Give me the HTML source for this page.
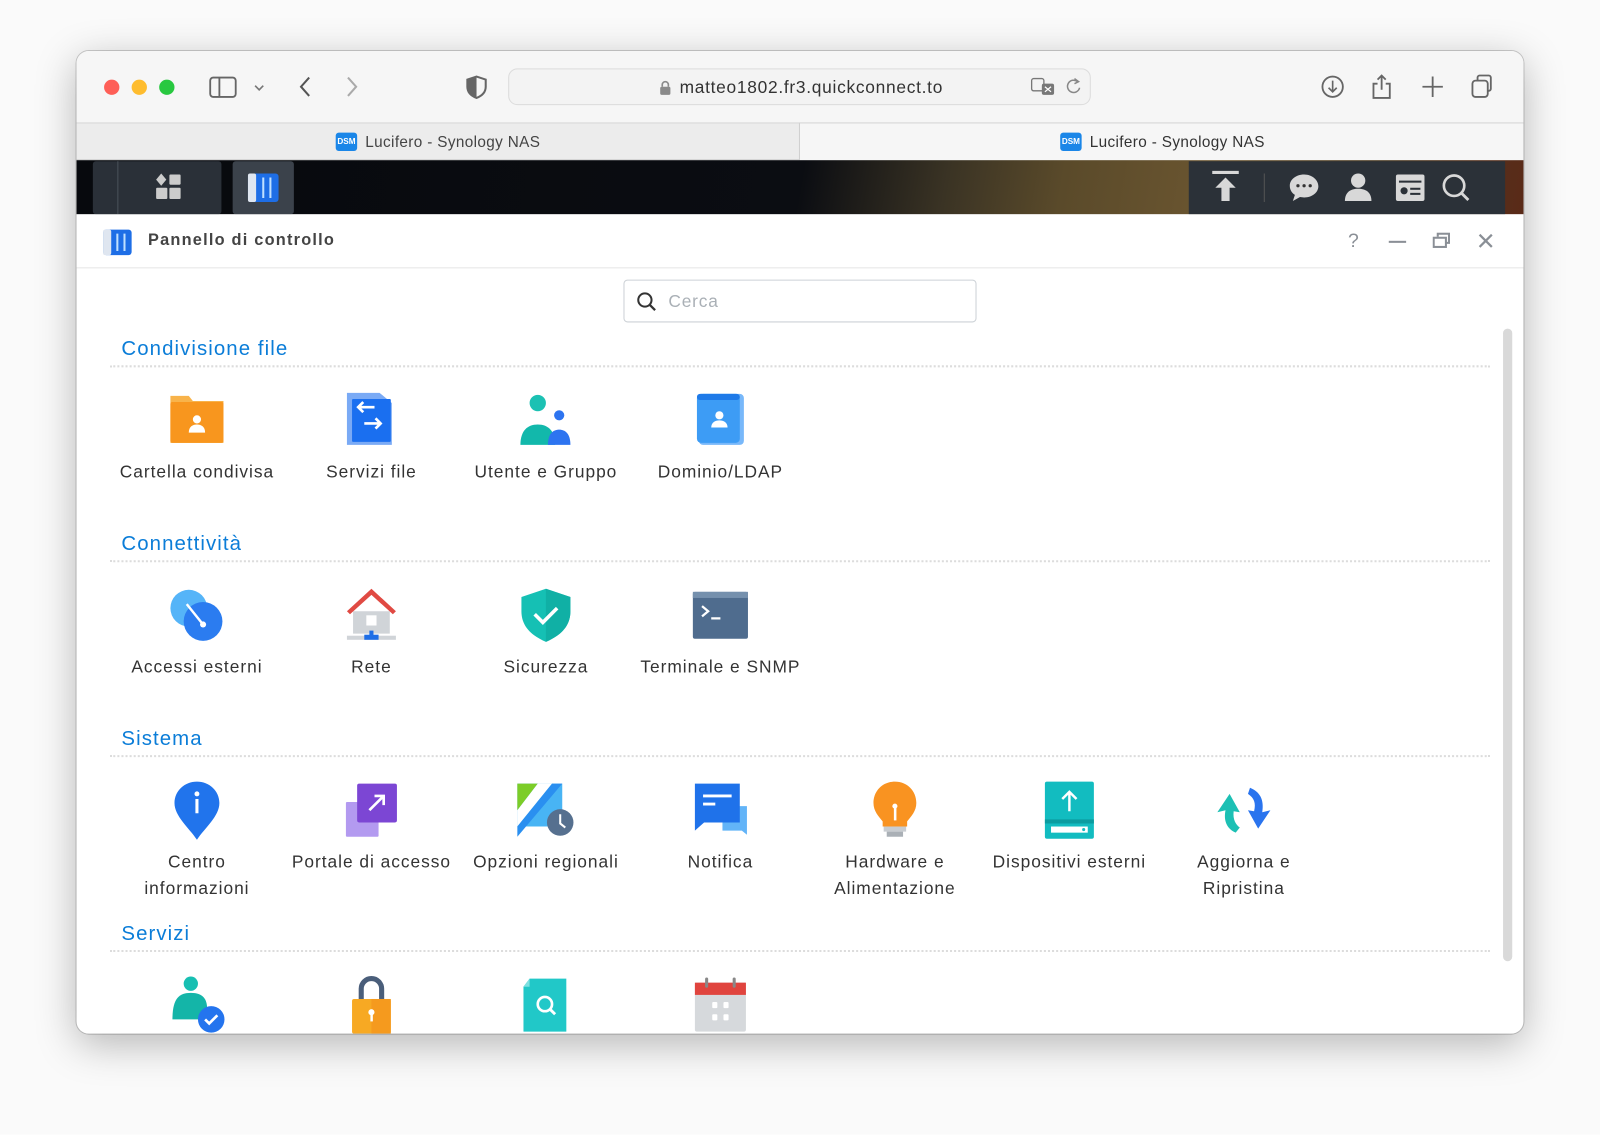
<!DOCTYPE html>
<html><head><meta charset="utf-8"><style>
*{margin:0;padding:0;box-sizing:border-box}
html,body{width:1600px;height:1135px;overflow:hidden;background:#fff;font-family:"Liberation Sans",sans-serif}
#s{position:absolute;left:0;top:0;width:1568px;height:1112px;transform:scale(1.020408);transform-origin:0 0;background:#fafafa}
.a{position:absolute}
#win{left:75px;top:50px;width:1418px;height:963px;border-radius:12px;overflow:hidden;background:#fff;box-shadow:0 10px 40px rgba(0,0,0,.28),0 0 0 1px rgba(0,0,0,.18)}
.dot{width:15px;height:15px;border-radius:50%;top:28px}
.sec{left:44px;font-size:20px;color:#0b7dd8;letter-spacing:1.05px}
.line{left:33px;width:1352px;border-top:2px dotted #dcdcdc;height:0}
.it{width:190px;text-align:center;font-size:17px;color:#333;line-height:26px;letter-spacing:0.95px}
.ic{width:60px;height:60px}
</style></head><body><div id="s">
<div id="win" class="a">
 <div class="a" style="left:0;top:0;width:1418px;height:70px;background:#f6f6f6"></div>
 <div class="a dot" style="left:27px;background:#fe5f57"></div>
 <div class="a dot" style="left:54px;background:#febc2e"></div>
 <div class="a dot" style="left:81px;background:#28c840"></div>
 <svg class="a" style="left:128px;top:24px" width="60" height="24"><rect x="3" y="2" width="25" height="19" rx="3" fill="none" stroke="#666" stroke-width="1.8"/><line x1="12" y1="2" x2="12" y2="21" stroke="#666" stroke-width="1.8"/><path d="M47 10l4 4 4-4" fill="none" stroke="#777" stroke-width="1.6"/></svg>
 <svg class="a" style="left:212px;top:22px" width="80" height="26"><path d="M16 4l-8 9 8 9" fill="none" stroke="#555" stroke-width="2"/><path d="M54 4l8 9-8 9" fill="none" stroke="#aaa" stroke-width="2"/></svg>
 <svg class="a" style="left:381px;top:23px" width="22" height="24"><path d="M11 2l9 3v7c0 6-4 9-9 11-5-2-9-5-9-11V5z" fill="none" stroke="#666" stroke-width="2"/><path d="M11 2v21c-5-2-9-5-9-11V5z" fill="#666"/></svg>
 <div class="a" style="left:423px;top:17px;width:571px;height:36px;border-radius:9px;background:#f3f3f3;border:1px solid #dcdcdc"></div>
 <svg class="a" style="left:571px;top:28px" width="12" height="16"><rect x="1" y="7" width="10" height="8" rx="1.5" fill="#8a8a8a"/><path d="M3 7V5a3 3 0 016 0v2" fill="none" stroke="#8a8a8a" stroke-width="1.6"/></svg>
 <div class="a" style="left:591px;top:26px;font-size:17px;color:#333;letter-spacing:0.7px">matteo1802.fr3.quickconnect.to</div>
 <svg class="a" style="left:935px;top:25px" width="28" height="20"><rect x="1" y="2" width="12" height="12" rx="2" fill="none" stroke="#777" stroke-width="1.3"/><rect x="11" y="7" width="12" height="11" rx="2" fill="#777"/><path d="M14 10l6 5M20 10l-6 5" stroke="#fff" stroke-width="1.2"/></svg>
 <svg class="a" style="left:968px;top:25px" width="18" height="20"><path d="M13 5a6 6 0 10 2 6" fill="none" stroke="#888" stroke-width="1.5"/><path d="M10 2l4 3-4 2" fill="none" stroke="#888" stroke-width="1.5"/></svg>
 <svg class="a" style="left:1218px;top:20px" width="190" height="30"><circle cx="13" cy="15" r="10" fill="none" stroke="#666" stroke-width="1.8"/><path d="M13 9v11M9 16l4 4 4-4" fill="none" stroke="#666" stroke-width="1.6"/><path d="M57 12h-4v14h16V12h-4M61 4v14M57 8l4-4 4 4" fill="none" stroke="#666" stroke-width="1.8"/><path d="M111 5v20M101 15h20" stroke="#666" stroke-width="1.8"/><rect x="150" y="9" width="15" height="16" rx="3" fill="none" stroke="#666" stroke-width="1.8"/><path d="M155 9V6a2 2 0 012-2h9a2 2 0 012 2v11a2 2 0 01-2 2h-1" fill="none" stroke="#666" stroke-width="1.8"/></svg>
 <div class="a" style="left:0;top:70px;width:1418px;height:37px;background:#ececec;border-top:1px solid #d6d6d6;border-bottom:1px solid #d0d0d0"></div>
 <div class="a" style="left:708px;top:70px;width:710px;height:37px;background:#f6f6f6;border-left:1px solid #d0d0d0;border-top:1px solid #d6d6d6"></div>
 <div class="a" style="left:254px;top:80px;width:21px;height:18px;background:#1a86e8;border-radius:3px;color:#fff;font-size:8px;font-weight:bold;line-height:18px;text-align:center">DSM</div>
 <div class="a" style="left:283px;top:81px;font-size:15px;color:#444;letter-spacing:0.35px">Lucifero - Synology NAS</div>
 <div class="a" style="left:964px;top:80px;width:21px;height:18px;background:#1a86e8;border-radius:3px;color:#fff;font-size:8px;font-weight:bold;line-height:18px;text-align:center">DSM</div>
 <div class="a" style="left:993px;top:81px;font-size:15px;color:#333;letter-spacing:0.35px">Lucifero - Synology NAS</div>
 <div class="a" style="left:0;top:107px;width:1418px;height:53px;background:linear-gradient(100deg,#07090d 0%,#0b0d12 50%,#3a3324 60%,#5a4a2a 68%,#6a5530 78%,#4a3a22 90%,#5a2a18 100%)"></div>
 <div class="a" style="left:16px;top:108px;width:126px;height:52px;background:#2a3038;border-radius:3px"></div>
 <div class="a" style="left:40px;top:108px;width:1px;height:52px;background:#4a525b"></div>
 <svg class="a" style="left:77px;top:119px" width="28" height="28"><path d="M6 1l5 6-5 6-5-6z" fill="#ccc"/><rect x="14" y="2" width="11" height="10" rx="1" fill="#ccc"/><rect x="1" y="15" width="11" height="11" rx="1" fill="#ccc"/><rect x="14" y="15" width="11" height="11" rx="1" fill="#ccc"/></svg>
 <div class="a" style="left:153px;top:108px;width:60px;height:52px;background:#3b424b;border-radius:3px"></div>
 <svg class="a" style="left:167px;top:119px" width="32" height="30"><rect x="1" y="1" width="30" height="28" rx="3" fill="#1e6ee6"/><rect x="1" y="1" width="8" height="28" rx="2" fill="#dfe6f0"/><path d="M16 5v20M23 5v20" stroke="#bfe0ff" stroke-width="2"/></svg>
 <div class="a" style="left:1090px;top:108px;width:310px;height:52px;background:#2b3138"></div>
 <svg class="a" style="left:1110px;top:116px" width="260" height="36"><path d="M3 3h26" stroke="#d8d8d8" stroke-width="3"/><path d="M16 8l-10 10h6v13h8V18h6z" fill="#d8d8d8"/><line x1="54" y1="4" x2="54" y2="32" stroke="#555" stroke-width="1"/><path d="M93 5c-8 0-14 5-14 11 0 4 2 7 5 9l-2 6 7-4c1 0 3 .5 4 .5 8 0 14-5 14-11S101 5 93 5z" fill="#d8d8d8"/><circle cx="87" cy="16" r="1.6" fill="#333"/><circle cx="93" cy="16" r="1.6" fill="#333"/><circle cx="99" cy="16" r="1.6" fill="#333"/><circle cx="146" cy="11" r="7" fill="#d8d8d8"/><path d="M133 31c0-9 6-12 13-12s13 3 13 12z" fill="#d8d8d8"/><rect x="183" y="5" width="28" height="26" rx="2" fill="#d8d8d8"/><rect x="186" y="11" width="22" height="2" fill="#2b3138"/><circle cx="191" cy="21" r="3.5" fill="#2b3138"/><rect x="197" y="18" width="10" height="2" fill="#2b3138"/><rect x="197" y="23" width="10" height="2" fill="#2b3138"/><circle cx="240" cy="16" r="10" fill="none" stroke="#d8d8d8" stroke-width="2.6"/><path d="M247 23l7 7" stroke="#d8d8d8" stroke-width="2.8"/></svg>
 <div class="a" style="left:0;top:160px;width:1418px;height:53px;background:#fff;border-bottom:1px solid #e6e6e6"></div>
 <svg class="a" style="left:25px;top:174px" width="30" height="27"><rect x="1" y="1" width="28" height="25" rx="3" fill="#1e6ee6"/><rect x="1" y="1" width="8" height="25" rx="2" fill="#dfe6f0"/><path d="M15 5v17M22 5v17" stroke="#bfe0ff" stroke-width="2"/></svg>
 <div class="a" style="left:70px;top:177px;font-size:16px;font-weight:bold;color:#444;letter-spacing:1.2px">Pannello di controllo</div>
 <div class="a" style="left:1246px;top:176px;font-size:19px;color:#8a8f96">?</div>
 <div class="a" style="left:1286px;top:186px;width:17px;height:2px;background:#8a8f96"></div>
 <svg class="a" style="left:1329px;top:178px" width="18" height="16"><rect x="1" y="5" width="12" height="9" fill="none" stroke="#8a8f96" stroke-width="2"/><path d="M5 4V1h11v9h-3" fill="none" stroke="#8a8f96" stroke-width="2"/></svg>
 <svg class="a" style="left:1373px;top:178px" width="16" height="16"><path d="M2 2l12 12M14 2L2 14" stroke="#8a8f96" stroke-width="2.2"/></svg>
 <div class="a" style="left:536px;top:224px;width:346px;height:42px;border:1px solid #ccd1d6;border-radius:4px;background:#fff"></div>
 <svg class="a" style="left:549px;top:236px" width="20" height="20"><circle cx="8" cy="8" r="6.5" fill="none" stroke="#333" stroke-width="2"/><path d="M13 13l5 5" stroke="#333" stroke-width="2.2"/></svg>
 <div class="a" style="left:580px;top:236px;font-size:17px;color:#aab0b6;letter-spacing:0.8px">Cerca</div>
 <div class="a" style="left:1398px;top:272px;width:9px;height:620px;border-radius:5px;background:#d9d9d9"></div>

 <div class="a sec" style="top:281px">Condivisione file</div>
 <div class="a line" style="top:308px"></div>
 <div class="a sec" style="top:472px">Connettività</div>
 <div class="a line" style="top:499px"></div>
 <div class="a sec" style="top:663px">Sistema</div>
 <div class="a line" style="top:690px"></div>
 <div class="a sec" style="top:854px">Servizi</div>
 <div class="a line" style="top:881px"></div>

 <svg class="a ic" style="left:88px;top:332px" viewBox="0 0 60 60"><path d="M4 6h18l4 5h30v41H4z" fill="#f8b34a"/><rect x="4" y="12" width="52" height="40" rx="2" fill="#f8961e"/><circle cx="30" cy="29" r="4" fill="#fff"/><path d="M22 42c0-6 4-8 8-8s8 2 8 8z" fill="#fff"/></svg>
 <div class="a it" style="left:23px;top:400px">Cartella condivisa</div>
 <svg class="a ic" style="left:259px;top:332px" viewBox="0 0 60 60"><path d="M6 3h32l12 10v41H6z" fill="#7aaaf5"/><rect x="11" y="9" width="38" height="42" rx="1" fill="#1a6ff0"/><path d="M33 17H17m5-5l-5 5 5 5M23 33h16m-5-5l5 5-5 5" fill="none" stroke="#fff" stroke-width="2.6"/></svg>
 <div class="a it" style="left:194px;top:400px">Servizi file</div>
 <svg class="a ic" style="left:430px;top:332px" viewBox="0 0 60 60"><circle cx="22" cy="13" r="8" fill="#1cc1b3"/><path d="M5 54c0-14 7-20 17-20s17 6 17 20z" fill="#12b8ab"/><circle cx="43" cy="25" r="5" fill="#2d74f0"/><path d="M32 54c0-11 5-15 11-15s11 4 11 15z" fill="#2d74f0"/></svg>
 <div class="a it" style="left:365px;top:400px">Utente e Gruppo</div>
 <svg class="a ic" style="left:601px;top:332px" viewBox="0 0 60 60"><rect x="9" y="4" width="44" height="50" rx="4" fill="#78b8fa"/><rect x="7" y="4" width="42" height="48" rx="4" fill="#3d9cf5"/><rect x="7" y="4" width="42" height="6" rx="3" fill="#1e7ae8"/><circle cx="29" cy="25" r="4" fill="#fff"/><path d="M21 37c0-5 4-7 8-7s8 2 8 7z" fill="#fff"/></svg>
 <div class="a it" style="left:536px;top:400px">Dominio/LDAP</div>

 <svg class="a ic" style="left:88px;top:523px" viewBox="0 0 60 60"><circle cx="22" cy="23" r="18" fill="#55b4f8"/><circle cx="36" cy="36" r="19" fill="#2b7cf0"/><path d="M20 19l16 20" stroke="#fff" stroke-width="2.4"/><circle cx="36" cy="39" r="3" fill="#fff"/></svg>
 <div class="a it" style="left:23px;top:591px">Accessi esterni</div>
 <svg class="a ic" style="left:259px;top:523px" viewBox="0 0 60 60"><path d="M12 26h36v22H12z" fill="#d0d4d8"/><path d="M30 4L6 26l3 3 21-19 21 19 3-3z" fill="#e04a43"/><rect x="25" y="30" width="10" height="10" fill="#fff"/><rect x="6" y="50" width="48" height="4" fill="#d0d4d8"/><rect x="28" y="45" width="4" height="6" fill="#1e6ee6"/><rect x="23" y="49" width="14" height="5" fill="#1e6ee6"/></svg>
 <div class="a it" style="left:194px;top:591px">Rete</div>
 <svg class="a ic" style="left:430px;top:523px" viewBox="0 0 60 60"><path d="M30 4l24 8v14c0 15-10 24-24 30C16 50 6 41 6 26V12z" fill="#15c0b4"/><path d="M30 4l24 8v14c0 15-10 24-24 30z" fill="#10b0a5"/><path d="M19 29l8 8 14-14" fill="none" stroke="#fff" stroke-width="3.5"/></svg>
 <div class="a it" style="left:365px;top:591px">Sicurezza</div>
 <svg class="a ic" style="left:601px;top:523px" viewBox="0 0 60 60"><rect x="3" y="7" width="54" height="46" rx="2" fill="#4f6c8e"/><rect x="3" y="7" width="54" height="6" fill="#7590ad"/><path d="M12 21l6 5-6 5" fill="none" stroke="#fff" stroke-width="2.2"/><path d="M21 33h9" stroke="#fff" stroke-width="2.2"/></svg>
 <div class="a it" style="left:536px;top:591px">Terminale e SNMP</div>

 <svg class="a ic" style="left:88px;top:714px" viewBox="0 0 60 60"><path d="M30 2c-12 0-22 9-22 21 0 13 14 24 22 36 8-12 22-23 22-36C52 11 42 2 30 2z" fill="#2174ec"/><circle cx="30" cy="14" r="2.4" fill="#fff"/><rect x="28.5" y="19" width="3" height="14" fill="#fff"/></svg>
 <div class="a it" style="left:23px;top:782px">Centro<br>informazioni</div>
 <svg class="a ic" style="left:259px;top:714px" viewBox="0 0 60 60"><rect x="5" y="22" width="32" height="34" rx="1" fill="#b39af0"/><rect x="16" y="4" width="39" height="38" rx="2" fill="#7c46d4"/><path d="M28 30l14-14m-9 0h9v9" fill="none" stroke="#fff" stroke-width="2.6"/></svg>
 <div class="a it" style="left:194px;top:782px">Portale di accesso</div>
 <svg class="a ic" style="left:430px;top:714px" viewBox="0 0 60 60"><path d="M2 4h44v42H2z" fill="#48b4f4"/><path d="M2 4h20L2 30z" fill="#7ccd28"/><path d="M22 4h14L2 46V30z" fill="#fff"/><path d="M36 4h10L2 56V46z" fill="#2a8ff0"/><circle cx="44" cy="42" r="13" fill="#56708f"/><path d="M44 34v9l5 4" fill="none" stroke="#fff" stroke-width="2"/></svg>
 <div class="a it" style="left:365px;top:782px">Opzioni regionali</div>
 <svg class="a ic" style="left:601px;top:714px" viewBox="0 0 60 60"><path d="M32 26h24v28l-5-4H32z" fill="#62b4f8"/><path d="M5 4h44v38H14l-9 8z" fill="#1f72ea"/><path d="M13 16h28M13 24h12" stroke="#fff" stroke-width="2.8"/></svg>
 <div class="a it" style="left:536px;top:782px">Notifica</div>
 <svg class="a ic" style="left:772px;top:714px" viewBox="0 0 60 60"><path d="M30 2c-12 0-21 9-21 21 0 8 5 13 9 18v5h24v-5c4-5 9-10 9-18C51 11 42 2 30 2z" fill="#f99321"/><rect x="19" y="46" width="22" height="5" fill="#c8ccd0"/><rect x="22" y="51" width="16" height="5" fill="#aab0b6"/><rect x="29" y="26" width="2.5" height="14" fill="#fff"/><circle cx="30" cy="26" r="2.5" fill="#fff"/></svg>
 <div class="a it" style="left:707px;top:782px">Hardware e<br>Alimentazione</div>
 <svg class="a ic" style="left:943px;top:714px" viewBox="0 0 60 60"><rect x="6" y="2" width="48" height="56" rx="2" fill="#12bcc0"/><rect x="6" y="39" width="48" height="4" fill="#0c9ca0"/><rect x="12" y="46" width="36" height="6" fill="#fff"/><circle cx="44" cy="49" r="1.5" fill="#12bcc0"/><path d="M30 31V12m-7 7l7-7 7 7" fill="none" stroke="#fff" stroke-width="2.4"/></svg>
 <div class="a it" style="left:878px;top:782px">Dispositivi esterni</div>
 <svg class="a ic" style="left:1114px;top:714px" viewBox="0 0 60 60"><path d="M36 8c10 4 14 12 12 24l8-2-12 18-10-18 6 1c2-8 0-13-6-17z" fill="#2a74ee"/><path d="M22 52c-9-4-12-12-10-22l-8 2 12-18 10 18-6-1c-1 8 2 13 6 16z" fill="#1cc0b4"/></svg>
 <div class="a it" style="left:1049px;top:782px">Aggiorna e<br>Ripristina</div>

 <svg class="a ic" style="left:88px;top:905px" viewBox="0 0 60 60"><circle cx="24" cy="9" r="7" fill="#17bfb2"/><path d="M6 44c0-20 6-26 18-26s16 6 16 16v10z" fill="#14b5a8"/><circle cx="44" cy="44" r="13" fill="#2474ee"/><path d="M38 44l4 4 8-8" fill="none" stroke="#fff" stroke-width="2.6"/></svg>
 <svg class="a ic" style="left:259px;top:905px" viewBox="0 0 60 60"><path d="M20 26V14a10 10 0 0120 0v12" fill="none" stroke="#4a5e7a" stroke-width="5"/><rect x="11" y="24" width="38" height="34" rx="2" fill="#f7a923"/><rect x="30" y="24" width="19" height="34" fill="#f59a1e"/><circle cx="30" cy="37" r="3" fill="#fff"/><rect x="29" y="37" width="2.4" height="9" fill="#fff"/></svg>
 <svg class="a ic" style="left:430px;top:905px" viewBox="0 0 60 60"><path d="M14 4h36v52H8V12z" fill="#21c8c8"/><path d="M8 12l6-8v8z" fill="#7ee0e0"/><circle cx="29" cy="29" r="7" fill="none" stroke="#fff" stroke-width="2.6"/><path d="M34 34l5 5" stroke="#fff" stroke-width="2.8"/></svg>
 <svg class="a ic" style="left:601px;top:905px" viewBox="0 0 60 60"><rect x="5" y="8" width="50" height="48" rx="2" fill="#d6d9dc"/><rect x="5" y="8" width="50" height="12" fill="#e0443e"/><rect x="15" y="3" width="3" height="10" rx="1.5" fill="#888"/><rect x="42" y="3" width="3" height="10" rx="1.5" fill="#888"/><rect x="22" y="27" width="5" height="6" rx="1" fill="#fff"/><rect x="33" y="27" width="5" height="6" rx="1" fill="#fff"/><rect x="22" y="39" width="5" height="6" rx="1" fill="#fff"/><rect x="33" y="39" width="5" height="6" rx="1" fill="#fff"/></svg>
</div>
</div></body></html>
